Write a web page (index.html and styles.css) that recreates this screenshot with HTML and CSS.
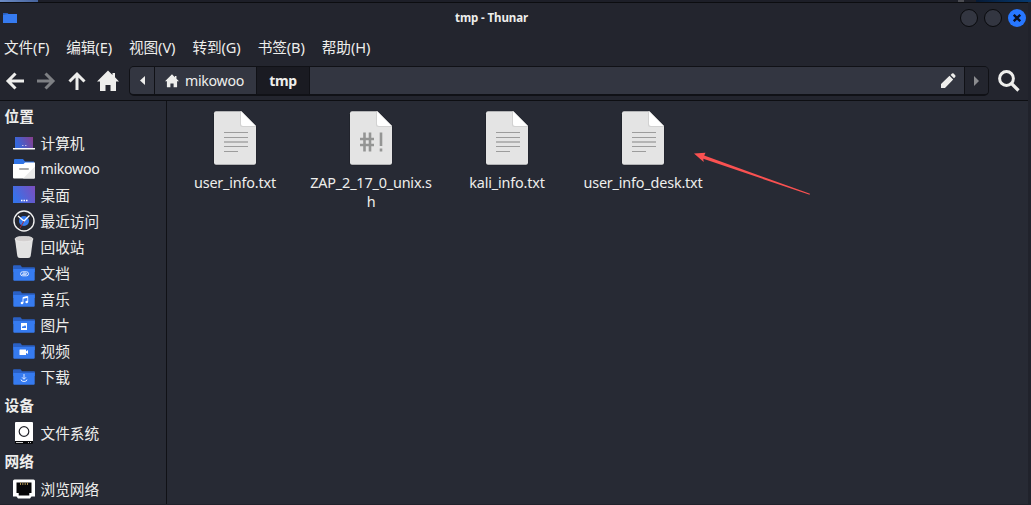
FILE: index.html
```html
<!DOCTYPE html>
<html lang="zh-CN">
<head>
    <meta charset="UTF-8">
    <meta name="viewport" content="width=device-width, initial-scale=1.0">
    <title>tmp - Thunar</title>
    <link rel="stylesheet" href="styles.css">
</head>
<body>
    <!-- shared icon shapes -->
    <svg class="defs" width="0" height="0">
        <defs>
            <linearGradient id="screen" x1="0" y1="0.3" x2="1" y2="0">
                <stop offset="0" stop-color="#3568dc"/>
                <stop offset="1" stop-color="#8a3d8c"/>
            </linearGradient>
            <linearGradient id="desk" x1="0" y1="0.6" x2="1" y2="0.2">
                <stop offset="0" stop-color="#3573ea"/>
                <stop offset="1" stop-color="#7850c0"/>
            </linearGradient>
            <symbol id="folder" viewBox="0 0 22 22">
                <path d="M0 4.200q0-1 1-1h6.500l1.500 2h12q1 0 1 1V10H0z" fill="#2a60c4"/>
                <path d="M.3 7h21.400v10.700q0 1-1 1H1.300q-1 0-1-1z" fill="#367bf0"/>
            </symbol>
            <symbol id="home" viewBox="0 0 22 22">
                <path d="M11 .5L0 11.500h3V21h5.500v-6h5v6H19v-9.500h3L18 7.300V3h-2.500v2z"/>
            </symbol>
            <symbol id="page" viewBox="0 0 44 56">
                <path d="M3 .8h25.500L43.500 16v37q0 2.500-2.500 2.500H3Q.3 55.500.3 53V3.500Q.3.800 3 .8z" fill="#17181e" opacity=".45"/>
                <path d="M3 1.200h25.500L43 16v36.800q0 2-2 2H3q-2 0-2-2V3.200q0-2 2-2z" fill="#e4e4e4"/>
                <path d="M27 1.500h1.500L43 16v1H29.500q-2.500 0-2.500-2.500z" fill="#d2d2d2"/>
                <path d="M28 1.500L42.500 16H30q-2 0-2-2z" fill="#fff"/>
            </symbol>
            <symbol id="textfile" viewBox="0 0 44 56">
                <use href="#page" width="44" height="56"/>
                <path d="M11 22.500h24M11 27.500h24M11 36.500h24M11 41.500h14" stroke="#9c9c9c"/>
                <path d="M11 32h24" stroke="#b4b4b4" stroke-width="2"/>
            </symbol>
        </defs>
    </svg>

    <div class="backdrop"><span class="tab"></span><span class="mark"></span><span class="glow"></span></div>

    <div class="window">
        <header class="titlebar">
            <svg class="app-icon" width="14" height="10" viewBox="0 0 14 10"><path d="M0 0h4.500l1 1H14v9H0z" fill="#285fbf"/><path d="M0 2l5-1h9v9H0z" fill="#367bf0"/></svg>
            <h1>tmp - Thunar</h1>
            <div class="controls">
                <span class="control"></span>
                <span class="control"></span>
                <span class="control close"><svg width="8" height="8" viewBox="0 0 8 8"><path d="M.8.8l6.400 6.400M7.200.8L.8 7.200" stroke="#0b1020" stroke-width="2.300"/></svg></span>
            </div>
        </header>

        <nav class="menubar">
            <span>文件(F)</span>
            <span>编辑(E)</span>
            <span>视图(V)</span>
            <span>转到(G)</span>
            <span>书签(B)</span>
            <span>帮助(H)</span>
        </nav>

        <div class="toolbar">
            <div class="nav-buttons">
                <svg width="20" height="20" viewBox="0 0 20 20"><path d="M19 10H3M10.500 2.500L3 10l7.500 7.500" class="arrow"/></svg>
                <svg class="disabled" width="20" height="20" viewBox="0 0 20 20"><path d="M1 10h16M9.500 2.500L17 10l-7.500 7.500" class="arrow"/></svg>
                <svg width="20" height="20" viewBox="0 0 20 20"><path d="M10 19V3M2.500 10.500L10 3l7.500 7.500" class="arrow"/></svg>
                <svg class="light home" width="22" height="22"><use href="#home"/></svg>
            </div>
            <div class="pathbar">
                <span class="crumb prev"><svg width="5" height="9" viewBox="0 0 5 9"><path d="M5 0v9L0 4.500z" fill="#eeeeec"/></svg></span>
                <span class="crumb user"><svg class="light" width="14" height="14"><use href="#home"/></svg><span class="name">mikowoo</span></span>
                <span class="crumb current">tmp</span>
                <span class="crumb rest"><svg width="16" height="16" viewBox="0 0 16 16"><path d="M1 15v-4L9.500 2.800l3.700 3.700L5 15zM10.600 1.900l1.400-1.300q.8-.6 1.600 0l1.600 1.600q.8.800 0 1.700L14 5.300z" fill="#eeeeec"/></svg></span>
                <span class="crumb next"><svg width="5" height="10" viewBox="0 0 5 10"><path d="M0 0v10l5-5z" fill="#8b8c8f"/></svg></span>
            </div>
            <svg class="search" width="22" height="22" viewBox="0 0 22 22"><circle cx="8.500" cy="8.500" r="6.900" fill="none" stroke="#eeeeec" stroke-width="3"/><path d="M13.500 13.500l7 7" stroke="#eeeeec" stroke-width="3.200"/></svg>
        </div>

        <main class="content">
            <aside class="sidebar">
                <h2>位置</h2>
                <ul>
                    <li><svg width="22" height="22" viewBox="0 0 22 22"><path d="M2 5h18v11H2z" fill="url(#screen)"/><path d="M9 13.500h1.500M12 13.500h1.500" stroke="#c3b4e4"/><path d="M0 16h22v1q0 .5-1 .5H1q-1 0-1-.5z" fill="#fff"/></svg>计算机</li>
                    <li><svg width="22" height="22" viewBox="0 0 22 22"><path d="M1 2q0-1 1-1h8l2 2.500h9V7H1z" fill="#2f73e5"/><path d="M0 6h10.500L12 4.500h10V19.500q0 1-1 1H1q-1 0-1-1z" fill="#fff"/><path d="M22 8.500v11q0 1-1 1H10z" fill="#eaeaea"/><path d="M7 11h8" stroke="#aaa" stroke-width="2" stroke-linecap="round"/></svg><span class="name">mikowoo</span></li>
                    <li><svg width="22" height="22" viewBox="0 0 22 22"><path d="M0 2h22v17H0z" fill="url(#desk)"/><path d="M8 16.500h1.500M10.500 16.500H12M13 16.500h1.500" stroke="#fff" stroke-width="1.300"/></svg>桌面</li>
                    <li><svg width="22" height="22" viewBox="0 0 22 22"><circle cx="11" cy="11" r="10" fill="#24262f" stroke="#f0f0f0" stroke-width="1.400"/><circle cx="11" cy="11" r="5" fill="#367bf0"/><path d="M5 6l6 5 5.500-5.500" fill="none" stroke="#fff" stroke-width="1.300"/><path d="M11 11l-4 7" stroke="#a82b3d"/></svg>最近访问</li>
                    <li><svg width="22" height="22" viewBox="0 0 22 22"><path d="M2 3l2.300 17q.3 2 2.500 2h8.400q2.200 0 2.500-2L20 3z" fill="#e2e2e2"/><ellipse cx="11" cy="3" rx="9" ry="2.800" fill="#d3d0d0" stroke="#ededed" stroke-width=".7"/></svg>回收站</li>
                    <li><svg width="22" height="22" viewBox="0 0 22 22"><use href="#folder"/><rect x="7.500" y="9.800" width="8" height="4" rx="2" class="glyph"/><path d="M9 12.300h4.300q.8-1.200-.8-1.200H10" class="glyph"/></svg>文档</li>
                    <li><svg width="22" height="22" viewBox="0 0 22 22"><use href="#folder"/><path d="M10 15V9.500l4.700-1V14" class="glyph"/><path d="M10 10l4.700-1" stroke="#fff" stroke-width="1.700"/><circle cx="9" cy="15" r="1.300" fill="#fff"/><circle cx="13.700" cy="14" r="1.300" fill="#fff"/></svg>音乐</li>
                    <li><svg width="22" height="22" viewBox="0 0 22 22"><use href="#folder"/><path d="M8 9h6v7H8z" fill="#fff"/><path d="M9 14v-1l1-1 1 .6 1-1.600 1 1.500V14z" fill="#367bf0"/></svg>图片</li>
                    <li><svg width="22" height="22" viewBox="0 0 22 22"><use href="#folder"/><path d="M7 9.500h6v2l2-1.500v4l-2-1.200V15H7q-.5 0-.5-.5V10q0-.5.5-.5z" fill="#fff"/></svg>视频</li>
                    <li><svg width="22" height="22" viewBox="0 0 22 22"><use href="#folder"/><path d="M11 8v5M9 11.300l2 2 2-2M8 13.500q0 2 3 2t3-2" class="glyph"/></svg>下载</li>
                </ul>
                <h2>设备</h2>
                <ul>
                    <li><svg width="22" height="22" viewBox="0 0 22 22"><path d="M3 0h16q1 0 1 1v18H2V1q0-1 1-1z" fill="#fff"/><path d="M2 19h18v2q0 1-1 1H3q-1 0-1-1z" fill="#08090b"/><path d="M3 20.500h7M15 20.500h1M17 20.500h1" stroke="#c8c8c8"/><circle cx="11" cy="9.500" r="4.800" fill="#fff" stroke="#23242b" stroke-width="1.200"/></svg>文件系统</li>
                </ul>
                <h2>网络</h2>
                <ul>
                    <li><svg width="22" height="22" viewBox="0 0 22 22"><path d="M1.500 1.500h19q1.500 0 1.500 1.500v15.500h-3.500L17 20.500H5l-1.500-2H0V3q0-1.500 1.500-1.500z" fill="#fff"/><path d="M3.500 4.500h15V15h-2.200v2.500H5.700V15H3.500z" fill="#060608"/><path d="M7.500 4.500V7M9.800 4.500V7M12.200 4.500V7M14.500 4.500V7" stroke="#a68b4e"/></svg>浏览网络</li>
                </ul>
            </aside>

            <section class="files">
                <figure>
                    <svg width="44" height="56"><use href="#textfile"/></svg>
                    <figcaption>user_info.txt</figcaption>
                </figure>
                <figure>
                    <svg width="44" height="56" viewBox="0 0 44 56"><use href="#page" width="44" height="56"/><path d="M15.500 22.500v19M21 22.500v19M11 29h14M11 35h14M32 22.500v13.500M32 38.500v3" stroke="#949594" stroke-width="2.600"/></svg>
                    <figcaption>ZAP_2_17_0_unix.s<br>h</figcaption>
                </figure>
                <figure>
                    <svg width="44" height="56"><use href="#textfile"/></svg>
                    <figcaption>kali_info.txt</figcaption>
                </figure>
                <figure>
                    <svg width="44" height="56"><use href="#textfile"/></svg>
                    <figcaption>user_info_desk.txt</figcaption>
                </figure>
                <svg class="pointer" width="118" height="44" viewBox="0 0 118 44"><path d="M1 2.500l11.500-.8-1.300 2.900L117 42.800l-.4 1L10.300 7.700l.4 3.300z" fill="#fa5151"/></svg>
            </section>
        </main>
    </div>
</body>
</html>
```

FILE: styles.css
```css
* {
    box-sizing: border-box;
}
body {
    margin: 0;
    height: 505px;
    overflow: hidden;
    background: #20222b;
    color: #eeeeec;
    font-family: "Noto Sans", "Noto Sans CJK SC", sans-serif;
    font-size: 14.667px;
    line-height: 19px;
}
svg {
    display: block;
    flex: none;
}
.defs {
    position: absolute;
}

/* strip of the desktop above the window */
.backdrop {
    display: flex;
    height: 2px;
    background: #1d1f28;
}
.backdrop .tab {
    width: 38px;
    background: linear-gradient(90deg, #6d8cc5, #46639c);
}
.backdrop .mark {
    width: 6px;
    margin-left: 920px;
    background: #4b4c52;
}
.backdrop .glow {
    flex: 1;
    margin-left: 12px;
    background: linear-gradient(90deg, #071a35, #063a70);
}

.window {
    display: flex;
    flex-direction: column;
    width: 1028px;
    height: 502px;
    border-top: 1px solid #0c0d10;
    background: #23252e;
}

.titlebar {
    display: grid;
    grid-template-columns: 80px 1fr 80px;
    align-items: center;
    height: 30px;
    padding-left: 3px;
}
.titlebar h1 {
    margin: 0;
    padding-right: 48px;
    text-align: center;
    font-size: 11.500px;
    line-height: 16px;
    letter-spacing: -0.1px;
}
.controls {
    display: flex;
    justify-content: flex-end;
    gap: 6px;
    padding-right: 2px;
}
.control {
    width: 18px;
    height: 18px;
    border: 1px solid #090a0d;
    border-radius: 50%;
    background: #333641;
}
.control.close {
    display: flex;
    align-items: center;
    justify-content: center;
    border: 0;
    background: #2777ff;
}

.menubar {
    display: flex;
    gap: 17px;
    height: 28px;
    padding: 5px 0 0 4px;
    letter-spacing: -0.1px;
}

.toolbar {
    display: flex;
    height: 40px;
    padding: 5px 8px 4px 5px;
    border-bottom: 1px solid #0d0e12;
}
.nav-buttons {
    display: flex;
    align-items: center;
    gap: 11px;
    width: 124px;
    height: 30px;
}
.nav-buttons .home {
    margin-left: -1px;
}
.arrow {
    fill: none;
    stroke: #eeeeec;
    stroke-width: 3;
}
.disabled {
    opacity: .45;
}
.light {
    fill: #eeeeec;
}
.pathbar {
    display: flex;
    width: 860px;
    height: 30px;
    border: 1px solid #101116;
    border-bottom-width: 2px;
    border-radius: 5px;
    overflow: hidden;
}
.crumb {
    display: flex;
    align-items: center;
    justify-content: center;
    background: #333641;
    border-right: 1px solid #101116;
}
.prev {
    width: 25px;
}
.user {
    width: 102px;
    gap: 6px;
    padding-right: 2px;
}
.name {
    font-size: 14.200px;
    letter-spacing: -0.3px;
}
.sidebar .name {
    margin-top: -2px;
}
.current {
    width: 53px;
    background: #1a1b22;
    font-size: 14px;
    font-weight: bold;
    letter-spacing: -0.4px;
}
.rest {
    flex: 1;
    justify-content: flex-end;
    padding-right: 8px;
}
.next {
    width: 23px;
    border: 0;
    background: #23252e;
}
.search {
    margin: 4px 0 0 9px;
}

.content {
    display: flex;
    flex: 1;
    background: #272a34;
}
.sidebar {
    width: 167px;
    border-right: 1px solid #101116;
}
.sidebar h2 {
    margin: 0;
    padding-left: 4.500px;
    height: 30px;
    font-size: 14.667px;
    line-height: 30px;
}
.sidebar h2:first-child {
    margin-top: 3px;
    height: 26px;
    line-height: 25px;
}
.sidebar ul {
    margin: 0;
    padding: 0 0 0 13px;
    list-style: none;
}
.sidebar li {
    display: flex;
    align-items: center;
    gap: 5.500px;
    height: 26px;
}
.glyph {
    fill: none;
    stroke: #dce8ff;
    stroke-width: 1;
}

.files {
    position: relative;
    display: flex;
    flex: 1;
    align-items: flex-start;
}
.files figure {
    display: flex;
    flex-direction: column;
    align-items: center;
    gap: 7px;
    width: 136px;
    margin: 0;
    padding-top: 9px;
}
.files figcaption {
    text-align: center;
    font-size: 14.400px;
    letter-spacing: -0.18px;
    white-space: nowrap;
}
/* red annotation arrow lying over the file area */
.pointer {
    position: absolute;
    left: 526px;
    top: 50px;
}
```
